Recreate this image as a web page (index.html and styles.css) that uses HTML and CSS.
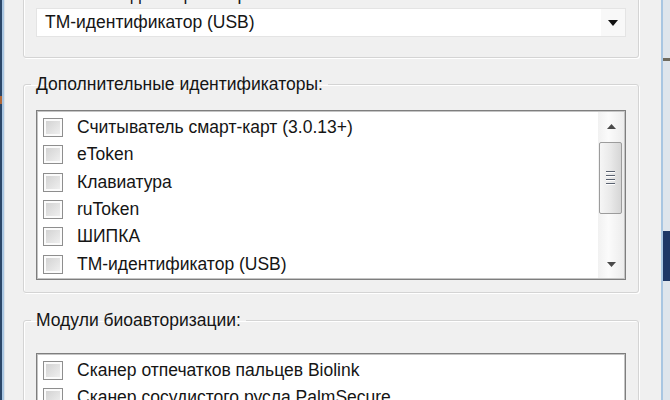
FILE: index.html
```html
<!DOCTYPE html>
<html lang="ru">
<head>
    <meta charset="UTF-8">
    <meta name="viewport" content="width=device-width, initial-scale=1.0">
    <title>Идентификаторы</title>
    <link rel="stylesheet" href="styles.css">
</head>
<body>

    <div class="screen">
        <div class="desk desk-left"><span class="mark"></span></div>
        <div class="frame-edge"></div>

        <div class="window">
            <fieldset class="group group-main">
                <legend>Основной идентификатор пользователя:</legend>
                <div class="combo">
                    <span class="combo-text">ТМ-идентификатор (USB)</span>
                    <span class="combo-btn">
                        <svg width="10" height="6" viewBox="0 0 10 6"><path d="M0 0h10L5 6z" fill="#111"/></svg>
                    </span>
                </div>
            </fieldset>

            <fieldset class="group group-extra">
                <legend>Дополнительные идентификаторы:</legend>
                <div class="listbox listbox-extra">
                    <ul class="items">
                        <li><span class="check"></span>Считыватель смарт-карт (3.0.13+)</li>
                        <li><span class="check"></span>eToken</li>
                        <li><span class="check"></span>Клавиатура</li>
                        <li><span class="check"></span>ruToken</li>
                        <li><span class="check"></span>ШИПКА</li>
                        <li><span class="check"></span>ТМ-идентификатор (USB)</li>
                    </ul>
                    <div class="scrollbar">
                        <div class="sb-btn">
                            <svg width="9" height="5" viewBox="0 0 9 5"><path d="M4.5 0L9 5H0z" fill="#4a4a4a"/></svg>
                        </div>
                        <div class="sb-thumb">
                            <span class="grip"></span>
                            <span class="grip"></span>
                            <span class="grip"></span>
                            <span class="grip"></span>
                        </div>
                        <div class="sb-track"></div>
                        <div class="sb-btn">
                            <svg width="9" height="5" viewBox="0 0 9 5"><path d="M0 0h9L4.5 5z" fill="#4a4a4a"/></svg>
                        </div>
                    </div>
                </div>
            </fieldset>

            <fieldset class="group group-bio">
                <legend>Модули биоавторизации:</legend>
                <div class="listbox listbox-bio">
                    <ul class="items">
                        <li><span class="check"></span>Сканер отпечатков пальцев Biolink</li>
                        <li><span class="check"></span>Сканер сосудистого русла PalmSecure</li>
                    </ul>
                </div>
            </fieldset>
        </div>

        <div class="frame-edge"></div>
        <div class="desk desk-right">
            <span class="blk blk-1"></span>
            <span class="blk blk-2"></span>
        </div>
    </div>

</body>
</html>
```

FILE: styles.css
```css
html, body {
    margin: 0;
    padding: 0;
    height: 400px;
    overflow: hidden;
}
body {
    font-family: "Liberation Sans", Arial, sans-serif;
    font-size: 17.5px;
    color: #151515;
    background: #f0f0f0;
}
.screen {
    display: flex;
    height: 400px;
}
.desk-left {
    width: 2px;
    background: #2b4769;
    display: flex;
    flex-direction: column;
}
.desk-left .mark {
    margin-top: 96px;
    height: 8px;
    background: #b0683a;
}
.frame-edge {
    width: 2px;
    background: #a9c6e2;
}
.desk-right {
    width: 7px;
    background: #dfe5ec;
    display: flex;
    flex-direction: column;
}
.desk-right .blk-1 {
    margin-top: 58px;
    height: 3px;
    background: #6f6a5e;
}
.desk-right .blk-2 {
    margin-top: 170px;
    height: 50px;
    background: #1e3766;
}
.window {
    flex: 1;
    background: #f0f0f0;
    border-left: 1px solid #dde2e7;
    padding: 0 22px 0 18px;
}

/* group boxes */
.group {
    margin: 0;
    border: 1px solid #d4d4d4;
    border-radius: 3px;
    box-shadow: inset 1px 1px 0 #fff, 1px 1px 0 #fff;
    padding: 0 12px 0 12px;
}
.group legend {
    margin-left: -5px;
    padding: 0 5px;
    line-height: 20px;
    color: #151515;
}
.group-main {
    margin-top: -16px;
    padding-top: 4px;
    padding-bottom: 20px;
}
.group-extra {
    margin-top: 16px;
    padding-top: 16px;
    padding-bottom: 12px;
}
.group-bio {
    margin-top: 17px;
    padding-top: 23px;
}

/* combo */
.combo {
    display: flex;
    align-items: center;
    height: 27px;
    background: #fff;
    border: 1px solid #e4e4e4;
}
.combo-text {
    flex: 1;
    padding-left: 8px;
}
.combo-btn {
    width: 24px;
    align-self: stretch;
    display: flex;
    align-items: center;
    justify-content: center;
    background: #f8f8f8;
}

/* list boxes */
.listbox {
    display: flex;
    background: #fff;
    border: 1px solid #7e7e7e;
    box-shadow: inset 0 0 0 1px #c4c4c4;
    padding: 1px;
    overflow: hidden;
}
.listbox-extra { height: 166px; }
.listbox-bio { height: 120px; }
.items {
    flex: 1;
    list-style: none;
    margin: 0;
    padding: 2px 0 0 5px;
}
.listbox-bio .items { padding-top: 2px; }
.items li {
    display: flex;
    align-items: center;
    height: 27.3px;
    white-space: nowrap;
}
.check {
    width: 18px;
    height: 17px;
    margin-right: 14px;
    border: 1px solid #8e8e8e;
    background: linear-gradient(135deg, #cfcfcf, #f3f3f3);
    box-shadow: inset 0 0 0 2px #fbfbfb;
}

/* scrollbar */
.scrollbar {
    width: 26px;
    display: flex;
    flex-direction: column;
    background: linear-gradient(to right, #f1f1f1, #fbfbfb 40%, #ececec);
}
.sb-btn {
    height: 29px;
    display: flex;
    align-items: center;
    justify-content: center;
}
.sb-btn:last-child { height: 27px; }
.sb-thumb {
    height: 70px;
    margin: 1px 2px 0 1px;
    border: 1px solid #9c9c9c;
    border-radius: 2px;
    background: linear-gradient(to right, #f6f6f6, #e9e9e9 50%, #d6d6d6);
    display: flex;
    flex-direction: column;
    align-items: center;
    justify-content: center;
    gap: 2px;
}
.grip {
    width: 9px;
    height: 1px;
    background: #5a6270;
    border-bottom: 1px solid #fff;
}
.sb-track { flex: 1; }
```
